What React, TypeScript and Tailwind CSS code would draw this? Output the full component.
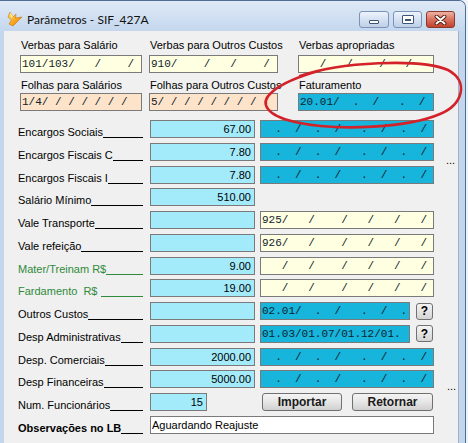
import React from "react";

const box = "h-[18px] border border-[#7a7a7a] leading-[16px] whitespace-pre overflow-hidden";
const mono = "font-['Liberation_Mono',monospace] text-[11px] pl-[1px] text-[#10232e]";
const num = "text-[11px] text-right pr-[3px] text-black bg-[#a3ebfb]";

const YELLOW = "bg-[#ffffe1]";
const PEACH = "bg-[#fde3c9]";
const CYAN = "bg-[#17b4dc]";

const DASH = "  .  /  .  /   .  /  .  /";
const SLASH = "   /   /    /   /   /   /";

const Mask: React.FC<{ bg: string; text: string; w?: string }> = ({ bg, text, w = "w-full" }) => (
  <div className={`${box} ${mono} ${bg} ${w}`}>{text}</div>
);

const Num: React.FC<{ value?: string; w?: string }> = ({ value = "", w = "w-[105px]" }) => (
  <div className={`${box} ${num} ${w}`}>{value}</div>
);

const Help = () => (
  <div className="ml-[6px] w-[17px] h-[17px] self-center rounded-[3px] border border-[#707070] bg-linear-to-b from-[#f4f4f4] to-[#d4d4d4] flex items-center justify-center text-[12px] font-bold leading-none">
    ?
  </div>
);

const WinButton: React.FC<{ label: string; w: string }> = ({ label, w }) => (
  <div
    className={`${w} h-[18px] rounded-[3px] border border-[#707070] bg-linear-to-b from-[#f4f4f4] via-[#e6e6e6] to-[#d0d0d0] flex items-center justify-center text-[12px] font-bold leading-none text-[#1a1a1a]`}
  >
    {label}
  </div>
);

type Row = { label: string; green?: boolean; bold?: boolean; value?: string | null; right?: React.ReactNode };

const rows: Row[] = [
  { label: "Encargos Sociais", value: "67.00", right: <Mask bg={CYAN} text={DASH} /> },
  { label: "Encargos Fiscais C", value: "7.80", right: <Mask bg={CYAN} text={DASH} /> },
  { label: "Encargos Fiscais I", value: "7.80", right: <Mask bg={CYAN} text={DASH} /> },
  { label: "Salário Mínimo", value: "510.00" },
  { label: "Vale Transporte", value: "", right: <Mask bg={YELLOW} text={"925/   /    /   /   /   /"} /> },
  { label: "Vale refeição", value: "", right: <Mask bg={YELLOW} text={"926/   /    /   /   /   /"} /> },
  { label: "Mater/Treinam R$", green: true, value: "9.00", right: <Mask bg={YELLOW} text={SLASH} /> },
  { label: "Fardamento  R$ ", green: true, value: "19.00", right: <Mask bg={YELLOW} text={SLASH} /> },
  {
    label: "Outros Custos",
    value: "",
    right: (
      <div className="flex">
        <Mask bg={CYAN} w="w-[150px]" text={"02.01/  .  /   .  /  ."} />
        <Help />
      </div>
    ),
  },
  {
    label: "Desp Administrativas",
    value: "",
    right: (
      <div className="flex">
        <Mask bg={CYAN} w="w-[150px]" text={"01.03/01.07/01.12/01."} />
        <Help />
      </div>
    ),
  },
  { label: "Desp. Comerciais", value: "2000.00", right: <Mask bg={CYAN} text={DASH} /> },
  { label: "Desp Financeiras", value: "5000.00", right: <Mask bg={CYAN} text={DASH} /> },
];

const TopField: React.FC<{ label: string; bg: string; text: string; first?: boolean }> = ({ label, bg, text, first }) => (
  <>
    <div className={`${first ? "" : "mt-[6px]"} h-[13px] leading-[13px] text-[11px] pl-[1px] whitespace-nowrap`}>{label}</div>
    <div className={first ? "mt-[3px]" : "mt-[1px]"}>
      <Mask bg={bg} text={text} />
    </div>
  </>
);

// label followed by the "______" filler line up to the field column
const Label: React.FC<{ row: Row }> = ({ row }) => (
  <div
    className={`col-start-1 self-end -mb-px w-[125px] flex items-end leading-[13px] text-[11px] ${
      row.green ? "text-[#2f8a3b]" : "text-black"
    } ${row.bold ? "font-bold" : ""}`}
  >
    <span className="whitespace-pre">{row.label}</span>
    <span className="flex-1 h-0 mb-[1px] border-b border-current" />
  </div>
);

const AppIcon = () => (
  <svg viewBox="0 0 17 16" className="ml-[7px] mt-[10px] w-[17px] h-[16px]">
    <defs>
      <linearGradient id="ic" x1="0" y1="0" x2="1" y2="1">
        <stop offset="0" stopColor="#ffe45c" />
        <stop offset="0.6" stopColor="#f7a21b" />
        <stop offset="1" stopColor="#e06a0c" />
      </linearGradient>
    </defs>
    <path d="M3 1 L6 6 L9 3 L8.5 7 L15 6 L11 10 L6 15 L2 13 L4.5 9 L1 6 Z" fill="url(#ic)" stroke="#c9700f" strokeWidth="0.6" />
    <path d="M3 1 L6 6 L4 7 Z" fill="#fff3a0" />
  </svg>
);

const TitleBar = () => (
  <div className="h-[30px] flex items-start bg-linear-to-b from-[#dfe9f6] to-[#c4d7ee] rounded-tr-[6px]">
    <AppIcon />
    <span className="ml-[3px] mt-[11px] text-[12px] leading-[15px] font-['Lato',sans-serif] text-[#111]">Parâmetros - SIF_427A</span>
    <div className="ml-auto mr-[10px] mt-[10px] flex gap-[4px]">
      <div className="w-[30px] h-[17px] rounded-[3px] border border-[#7a93b6] bg-linear-to-b from-[#edf3fb] via-[#d5e2f2] to-[#bed0e8] flex items-end justify-center pb-[3px]">
        <div className="w-[10px] h-[4px] bg-white border border-[#3d5474] rounded-[1px]" />
      </div>
      <div className="w-[29px] h-[17px] rounded-[3px] border border-[#7a93b6] bg-linear-to-b from-[#edf3fb] via-[#d5e2f2] to-[#bed0e8] flex items-center justify-center">
        <div className="w-[12px] h-[9px] rounded-[1px] border border-[#3d5474] bg-white px-[2px] pt-[3px] pb-[2px]">
          <div className="w-full h-full border border-[#3d5474] bg-[#cfdcee]" />
        </div>
      </div>
      <div className="w-[29px] h-[17px] rounded-[3px] border border-[#8a3a2c] bg-linear-to-b from-[#eeb2a3] via-[#d8725f] to-[#c2412c] flex items-center justify-center">
        <svg width="13" height="10" viewBox="0 0 13 10">
          <path d="M2.5 1.5 L10.5 8.5 M10.5 1.5 L2.5 8.5" stroke="#4a1c12" strokeWidth="3.8" strokeLinecap="round" />
          <path d="M2.5 1.5 L10.5 8.5 M10.5 1.5 L2.5 8.5" stroke="#ffffff" strokeWidth="2" strokeLinecap="round" />
        </svg>
      </div>
    </div>
  </div>
);

export default function App() {
  return (
    <div className="relative w-[468px] h-[443px] overflow-hidden bg-[#eef3f8] font-['Liberation_Sans',Arial,sans-serif]">
      <div className="w-[466px] h-[460px] border-t border-r border-[#4f6d94] rounded-tr-[7px] bg-[#c3d6ed] flex flex-col">
        <TitleBar />
        <div className="flex flex-1 pl-[4px] pr-[7px]">
          <div className="flex-1 bg-[#f0f0f0] border-r border-[#9fb2ca] pt-[8px]">
            {/* top block */}
            <div className="flex pl-[16px]">
              <div className="w-[122px]">
                <TopField first label="Verbas para Salário" bg={YELLOW} text={"101/103/   /    /"} />
                <TopField label="Folhas para Salários" bg={PEACH} text={"1/4/ / / / / / /"} />
              </div>
              <div className="w-[129px] ml-[7px]">
                <TopField first label="Verbas para Outros Custos" bg={YELLOW} text={"910/    /   /    /"} />
                <TopField label="Folhas para Outros Custos" bg={PEACH} text={"5/ / / / / / / /"} />
              </div>
              <div className="w-[136px] ml-[20px]">
                <TopField first label="Verbas apropriadas" bg={YELLOW} text={"   /   /    /   /"} />
                <TopField label="Faturamento" bg={CYAN} text={"20.01/  .  /   .  /"} />
              </div>
            </div>

            {/* lower grid */}
            <div className="mt-[9px] ml-[14px] grid grid-cols-[132px_110px_174px_24px] auto-rows-[18px] gap-y-[4.75px]">
              <div className="col-start-4 row-start-2 row-span-2 self-center mb-[5px] pl-[12px] text-[11px] leading-none">...</div>
              <div className="col-start-4 row-start-12 row-span-2 self-center mb-[8px] pl-[13px] text-[11px] leading-none">...</div>
              {rows.map((r) => (
                <React.Fragment key={r.label}>
                  <Label row={r} />
                  <div>
                    <Num value={r.value ?? ""} />
                  </div>
                  {r.right ? <div>{r.right}</div> : null}
                </React.Fragment>
              ))}
              <Label row={{ label: "Num. Funcionários" }} />
              <div>
                <Num value="15" w="w-[57px]" />
              </div>
              <div className="flex gap-[10px] pl-[2px]">
                <WinButton label="Importar" w="w-[80px]" />
                <WinButton label="Retornar" w="w-[81px]" />
              </div>
              <Label row={{ label: "Observações no LB", bold: true }} />
              <div className="col-span-2">
                <div className={`${box} w-[284px] bg-white text-[11px] pl-[1px] text-black`}>Aguardando Reajuste</div>
              </div>
            </div>
          </div>
        </div>
      </div>

      {/* hand drawn red mark */}
      <svg className="absolute inset-0 w-[468px] h-[443px] pointer-events-none" viewBox="0 0 468 443">
        <path
          d="M300 76 C 340 62, 420 58, 448 70 C 470 82, 462 105, 440 114 C 410 127, 340 132, 295 122 C 268 116, 258 104, 272 92 C 282 83, 300 76, 322 70"
          fill="none"
          stroke="#d3222a"
          strokeWidth="2.6"
          strokeLinecap="round"
        />
      </svg>
    </div>
  );
}
